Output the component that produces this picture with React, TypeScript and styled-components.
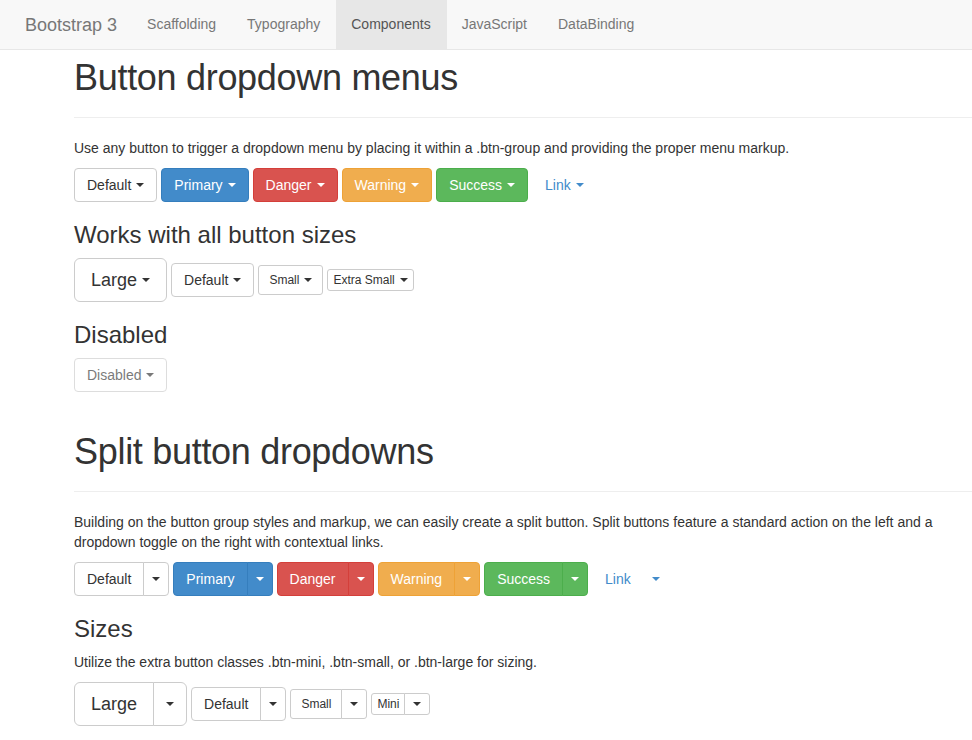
import styled, { createGlobalStyle, css } from 'styled-components'

type Variant = 'default' | 'primary' | 'danger' | 'warning' | 'success' | 'link'
type Size = 'lg' | 'md' | 'sm' | 'xs'
type Part = 'single' | 'main' | 'toggle'

const VARIANTS: Record<Variant, { bg: string; border: string; color: string }> = {
  default: { bg: '#fff', border: '#ccc', color: '#333' },
  primary: { bg: '#428bca', border: '#357ebd', color: '#fff' },
  danger: { bg: '#d9534f', border: '#d43f3a', color: '#fff' },
  warning: { bg: '#f0ad4e', border: '#eea236', color: '#fff' },
  success: { bg: '#5cb85c', border: '#4cae4c', color: '#fff' },
  link: { bg: 'transparent', border: 'transparent', color: '#428bca' },
}

const SIZES: Record<Size, { font: number; lineHeight: string; padY: number; padX: number; radius: number; togglePad: number }> = {
  lg: { font: 18, lineHeight: '22px', padY: 10, padX: 16, radius: 6, togglePad: 12 },
  md: { font: 14, lineHeight: '20px', padY: 6, padX: 12, radius: 4, togglePad: 8 },
  sm: { font: 12, lineHeight: '18px', padY: 5, padX: 10, radius: 3, togglePad: 8 },
  xs: { font: 12, lineHeight: '18px', padY: 1, padX: 5, radius: 3, togglePad: 8 },
}

const GlobalStyle = createGlobalStyle`
  html, body {
    margin: 0;
    padding: 0;
    background: #fff;
    overflow-x: hidden;
  }
  body {
    font-family: "Liberation Sans", Arial, Helvetica, sans-serif;
    font-size: 14px;
    line-height: 20px;
    color: #333;
  }
`

const Navbar = styled.nav`
  display: flex;
  height: 49px;
  padding-left: 10px;
  background-color: #f8f8f8;
  border-bottom: 1px solid #e7e7e7;
`

const Brand = styled.a`
  padding: 15px;
  font-size: 18px;
  line-height: 20px;
  color: #777;
  text-decoration: none;
`

const NavLink = styled.a<{ $active?: boolean }>`
  padding: 15px 16px 15px 15px;
  line-height: 19px;
  color: ${({ $active }) => ($active ? '#555' : '#777')};
  background-color: ${({ $active }) => ($active ? '#e7e7e7' : 'transparent')};
  text-decoration: none;
`

const Main = styled.main`
  padding-left: 74px;
`

const PageHeader = styled.div<{ $first?: boolean }>`
  margin: ${({ $first }) => ($first ? '8px' : '40px')} 0 20px;
  padding-bottom: 9px;
  border-bottom: 1px solid #eee;
`

const Title = styled.h1`
  margin: 0 0 10px;
  font-size: 36px;
  font-weight: 500;
  line-height: 1.1;
  letter-spacing: -0.3px;
`

const SubTitle = styled.h3`
  margin: 20px 0 10px;
  font-size: 24px;
  font-weight: 500;
  line-height: 1.1;
`

const Lead = styled.p`
  margin: 0 0 10px;
`

const Toolbar = styled.div`
  display: flex;
  align-items: center;
  gap: 4px;
`

const BtnGroup = styled.div`
  display: inline-flex;
`

const Btn = styled.button<{ $variant: Variant; $size: Size; $part: Part }>`
  display: inline-flex;
  align-items: center;
  margin: 0;
  font-family: inherit;
  font-weight: normal;
  white-space: nowrap;
  cursor: pointer;
  border: 1px solid ${({ $variant }) => VARIANTS[$variant].border};
  background-color: ${({ $variant }) => VARIANTS[$variant].bg};
  color: ${({ $variant }) => VARIANTS[$variant].color};
  ${({ $size, $part }) => {
    const s = SIZES[$size]
    const padX = $part === 'toggle' ? s.togglePad : s.padX
    return css`
      font-size: ${s.font}px;
      line-height: ${s.lineHeight};
      padding: ${s.padY}px ${padX}px;
      border-radius: ${$part === 'main' ? `${s.radius}px 0 0 ${s.radius}px` : $part === 'toggle' ? `0 ${s.radius}px ${s.radius}px 0` : `${s.radius}px`};
      margin-left: ${$part === 'toggle' ? '-1px' : '0'};
    `
  }}

  &:disabled {
    opacity: 0.65;
    cursor: not-allowed;
  }
`

const Caret = styled.span<{ $inline?: boolean }>`
  display: inline-block;
  width: 0;
  height: 0;
  margin-left: ${({ $inline }) => ($inline ? '5px' : '0')};
  border-top: 4px solid currentColor;
  border-left: 4px solid transparent;
  border-right: 4px solid transparent;
`

const NAV = ['Scaffolding', 'Typography', 'Components', 'JavaScript', 'DataBinding']

const COLOR_BUTTONS: { label: string; variant: Variant }[] = [
  { label: 'Default', variant: 'default' },
  { label: 'Primary', variant: 'primary' },
  { label: 'Danger', variant: 'danger' },
  { label: 'Warning', variant: 'warning' },
  { label: 'Success', variant: 'success' },
  { label: 'Link', variant: 'link' },
]

const SIZED_BUTTONS: { label: string; size: Size }[] = [
  { label: 'Large', size: 'lg' },
  { label: 'Default', size: 'md' },
  { label: 'Small', size: 'sm' },
  { label: 'Extra Small', size: 'xs' },
]

const SPLIT_SIZES: { label: string; size: Size }[] = [
  { label: 'Large', size: 'lg' },
  { label: 'Default', size: 'md' },
  { label: 'Small', size: 'sm' },
  { label: 'Mini', size: 'xs' },
]

const DropdownButton = ({ label, variant = 'default', size = 'md', disabled }: { label: string; variant?: Variant; size?: Size; disabled?: boolean }) => (
  <BtnGroup>
    <Btn $variant={variant} $size={size} $part="single" disabled={disabled}>
      {label}
      <Caret $inline />
    </Btn>
  </BtnGroup>
)

const SplitButton = ({ label, variant = 'default', size = 'md' }: { label: string; variant?: Variant; size?: Size }) => (
  <BtnGroup>
    <Btn $variant={variant} $size={size} $part="main">
      {label}
    </Btn>
    <Btn $variant={variant} $size={size} $part="toggle" aria-label="Toggle dropdown">
      <Caret />
    </Btn>
  </BtnGroup>
)

export default function App() {
  return (
    <>
      <GlobalStyle />
      <Navbar>
        <Brand href="#">Bootstrap 3</Brand>
        {NAV.map((item) => (
          <NavLink key={item} href="#" $active={item === 'Components'}>
            {item}
          </NavLink>
        ))}
      </Navbar>
      <Main>
        <PageHeader $first>
          <Title>Button dropdown menus</Title>
        </PageHeader>
        <Lead>Use any button to trigger a dropdown menu by placing it within a .btn-group and providing the proper menu markup.</Lead>
        <Toolbar>
          {COLOR_BUTTONS.map((b) => (
            <DropdownButton key={b.label} label={b.label} variant={b.variant} />
          ))}
        </Toolbar>

        <SubTitle>Works with all button sizes</SubTitle>
        <Toolbar>
          {SIZED_BUTTONS.map((b) => (
            <DropdownButton key={b.label} label={b.label} size={b.size} />
          ))}
        </Toolbar>

        <SubTitle>Disabled</SubTitle>
        <Toolbar>
          <DropdownButton label="Disabled" disabled />
        </Toolbar>

        <PageHeader>
          <Title>Split button dropdowns</Title>
        </PageHeader>
        <Lead>
          Building on the button group styles and markup, we can easily create a split button. Split buttons feature a standard action on the left and a dropdown toggle on the right with contextual links.
        </Lead>
        <Toolbar>
          {COLOR_BUTTONS.map((b) => (
            <SplitButton key={b.label} label={b.label} variant={b.variant} />
          ))}
        </Toolbar>

        <SubTitle>Sizes</SubTitle>
        <Lead>Utilize the extra button classes .btn-mini, .btn-small, or .btn-large for sizing.</Lead>
        <Toolbar>
          {SPLIT_SIZES.map((b) => (
            <SplitButton key={b.label} label={b.label} size={b.size} />
          ))}
        </Toolbar>
      </Main>
    </>
  )
}
